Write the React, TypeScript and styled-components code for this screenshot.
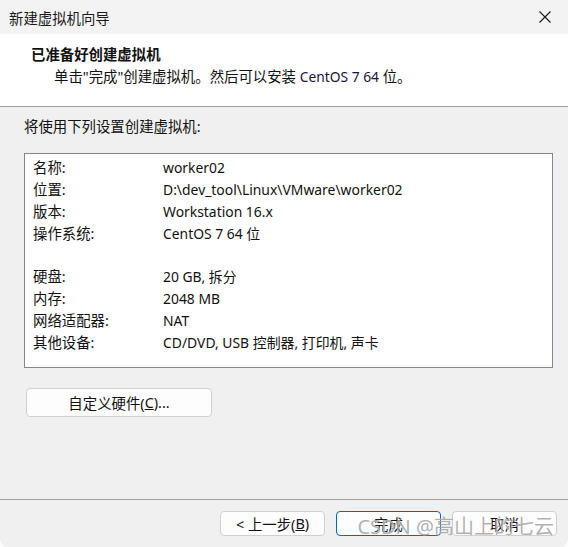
import React from "react";
import styled, { createGlobalStyle } from "styled-components";

const GlobalStyle = createGlobalStyle`
  html, body {
    margin: 0;
    padding: 0;
    background: #ffffff;
  }
  body {
    font-family: "Noto Sans", "Noto Sans CJK SC", sans-serif;
    font-size: 14.4px;
    color: #111;
  }
`;

const settings = [
  { label: "名称:", value: "worker02" },
  { label: "位置:", value: "D:\\dev_tool\\Linux\\VMware\\worker02" },
  { label: "版本:", value: "Workstation 16.x" },
  { label: "操作系统:", value: "CentOS 7 64 位" },
  { label: "", value: "" },
  { label: "硬盘:", value: "20 GB, 拆分" },
  { label: "内存:", value: "2048 MB" },
  { label: "网络适配器:", value: "NAT" },
  { label: "其他设备:", value: "CD/DVD, USB 控制器, 打印机, 声卡" },
];

function CloseIcon() {
  return (
    <svg width="12" height="12" viewBox="0 0 12 12">
      <path d="M0.5 0.5 L11.5 11.5 M11.5 0.5 L0.5 11.5" stroke="#1a1a1a" strokeWidth="1.1" />
    </svg>
  );
}

export default function App() {
  return (
    <>
      <GlobalStyle />
      <Window>
        <TitleBar>
          <WindowTitle>新建虚拟机向导</WindowTitle>
          <CloseButton>
            <CloseIcon />
          </CloseButton>
        </TitleBar>
        <Header>
          <HeaderTitle>已准备好创建虚拟机</HeaderTitle>
          <HeaderText>
            单击"完成"创建虚拟机。然后可以安装 <Latin>CentOS 7 64</Latin> 位。
          </HeaderText>
        </Header>
        <Body>
          <Intro>将使用下列设置创建虚拟机:</Intro>
          <SummaryBox>
            {settings.map((row, i) => (
              <SummaryRow key={i}>
                <RowLabel>{row.label}</RowLabel>
                <RowValue>{row.value}</RowValue>
              </SummaryRow>
            ))}
          </SummaryBox>
          <CustomButton>
            自定义硬件(<u>C</u>)...
          </CustomButton>
        </Body>
        <Footer>
          <DialogButton>
            &lt; 上一步(<u>B</u>)
          </DialogButton>
          <DialogButton $primary>完成</DialogButton>
          <DialogButton>取消</DialogButton>
          <Watermark>CSDN @高山上的七云</Watermark>
        </Footer>
      </Window>
    </>
  );
}

const Window = styled.div`
  height: 547px;
  display: flex;
  flex-direction: column;
  background: #f0f0f0;
  border-radius: 0 0 8px 8px;
  overflow: hidden;
  position: relative;
`;

const TitleBar = styled.div`
  height: 34px;
  flex: none;
  display: flex;
  align-items: center;
  justify-content: space-between;
  background: #f3f3f3;
  padding-left: 9px;
`;

const WindowTitle = styled.div`
  font-size: 14.4px;
  color: #1a1a1a;
`;

const CloseButton = styled.div`
  width: 46px;
  height: 34px;
  display: flex;
  align-items: center;
  justify-content: center;
`;

const Header = styled.div`
  height: 73px;
  flex: none;
  background: #ffffff;
  border-bottom: 1px solid #a0a0a0;
  padding: 10px 0 0 31px;
  box-sizing: border-box;
`;

const HeaderTitle = styled.div`
  font-weight: bold;
  line-height: 22px;
`;

const HeaderText = styled.div`
  padding-left: 23px;
  line-height: 22px;
`;

const Latin = styled.span`
  font-size: 13.8px;
  color: #14143c;
`;

const Body = styled.div`
  flex: 1;
  padding: 10px 15px 0 24px;
  display: flex;
  flex-direction: column;
  align-items: flex-start;
`;

const Intro = styled.div`
  line-height: 20px;
  margin-bottom: 16px;
`;

const SummaryBox = styled.div`
  align-self: stretch;
  height: 215px;
  box-sizing: border-box;
  background: #ffffff;
  border: 1px solid #828790;
  padding: 3px 8px 0;
`;

const SummaryRow = styled.div`
  display: flex;
  height: 21.9px;
  line-height: 21.9px;
`;

const RowLabel = styled.div`
  width: 130px;
  flex: none;
`;

const RowValue = styled.div`
  font-size: 13.9px;
  white-space: nowrap;
`;

const CustomButton = styled.div`
  margin: 20px 0 0 2px;
  width: 186px;
  height: 29px;
  box-sizing: border-box;
  border: 1px solid #d0d0d0;
  border-radius: 4px;
  background: #fdfdfd;
  display: flex;
  align-items: center;
  justify-content: center;
`;

const Footer = styled.div`
  height: 48px;
  flex: none;
  border-top: 1px solid #a0a0a0;
  box-sizing: border-box;
  display: flex;
  align-items: flex-start;
  justify-content: flex-end;
  gap: 11px;
  padding: 11px 11px 0 0;
  position: relative;
`;

const DialogButton = styled.div<{ $primary?: boolean }>`
  width: 105px;
  height: 25px;
  box-sizing: border-box;
  border: 1px solid ${(p) => (p.$primary ? "#0067c0" : "#d0d0d0")};
  border-radius: 4px;
  background: #fdfdfd;
  display: flex;
  align-items: center;
  justify-content: center;
`;

const Watermark = styled.div`
  position: absolute;
  right: 14px;
  top: 14px;
  font-size: 20px;
  line-height: 26px;
  color: rgba(110, 110, 110, 0.55);
  text-shadow: 0 0 1px rgba(255, 255, 255, 0.9);
  white-space: nowrap;
  pointer-events: none;
`;
